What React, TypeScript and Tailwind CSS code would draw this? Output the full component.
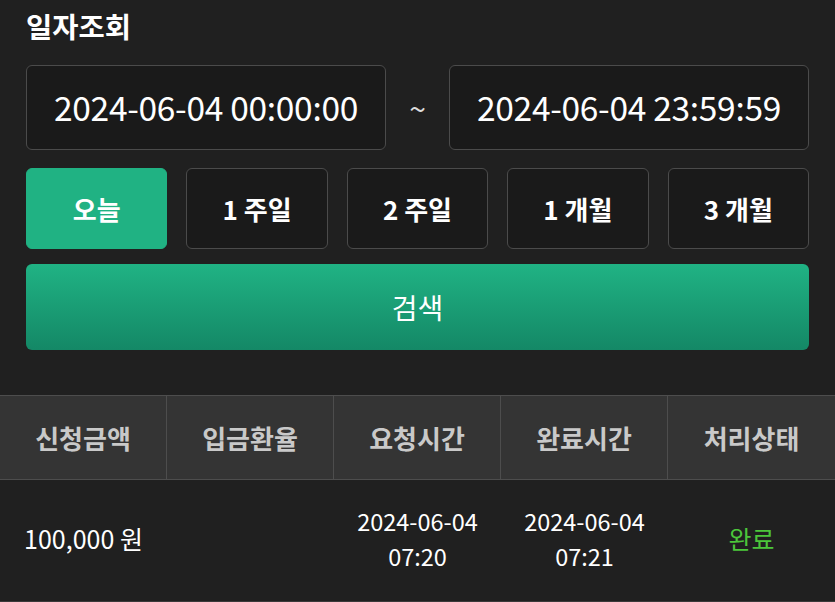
const FONT = "font-['Noto_Sans_CJK_KR','Noto_Sans',sans-serif]";

const periods = ['오늘', '1 주일', '2 주일', '1 개월', '3 개월'];
const headers = ['신청금액', '입금환율', '요청시간', '완료시간', '처리상태'];

function DateBox({ value }: { value: string }) {
  return (
    <div className="flex-1 h-[85px] rounded-[6px] border border-[#4b4b4b] bg-[#1a1a1a] flex items-center justify-center text-[33.5px] text-white tracking-[-0.3px]">
      {value}
    </div>
  );
}

export default function App() {
  const selected = 0;

  return (
    <div className={`${FONT} w-[835px] h-[602px] bg-[#202020] overflow-hidden`}>
      <div className="px-[26px] pt-[2px]">
        <div className="h-[48px] flex items-center text-[28.5px] font-bold text-white">일자조회</div>

        <div className="mt-[15px] flex items-center">
          <DateBox value="2024-06-04 00:00:00" />
          <div className="w-[63px] text-center text-[30px] text-[#dddddd]">~</div>
          <DateBox value="2024-06-04 23:59:59" />
        </div>

        <div className="mt-[18px] grid grid-cols-5 gap-[19px]">
          {periods.map((p, i) => (
            <button
              key={p}
              className={
                i === selected
                  ? 'h-[81px] rounded-[6px] bg-[#20b283] border border-[#20b283] text-white text-[26px] font-bold'
                  : 'h-[81px] rounded-[6px] bg-[#1a1a1a] border border-[#4b4b4b] text-white text-[26px] font-bold'
              }
            >
              {p}
            </button>
          ))}
        </div>

        <button className="mt-[15px] w-full h-[86px] rounded-[6px] bg-gradient-to-b from-[#20b384] to-[#148866] text-white text-[28px]">
          검색
        </button>
      </div>

      <div className="mt-[45px]">
        <div className="grid grid-cols-5 h-[85px] bg-[#343434] border-y border-[#4d4d4d]">
          {headers.map((h, i) => (
            <div
              key={h}
              className={`flex items-center justify-center text-[26px] font-bold text-[#c9c9c9] ${i < 4 ? 'border-r border-[#4d4d4d]' : ''}`}
            >
              {h}
            </div>
          ))}
        </div>
        <div className="grid grid-cols-5 h-[122px] pb-[3px] border-b border-[#3a3a3a] text-[23.5px] text-white">
          <div className="flex items-center justify-center text-[25px]">100,000 원</div>
          <div />
          <div className="flex flex-col items-center justify-center leading-[35px]">
            <span>2024-06-04</span>
            <span>07:20</span>
          </div>
          <div className="flex flex-col items-center justify-center leading-[35px]">
            <span>2024-06-04</span>
            <span>07:21</span>
          </div>
          <div className="flex items-center justify-center text-[25px] text-[#4cc63b]">완료</div>
        </div>
      </div>
    </div>
  );
}
